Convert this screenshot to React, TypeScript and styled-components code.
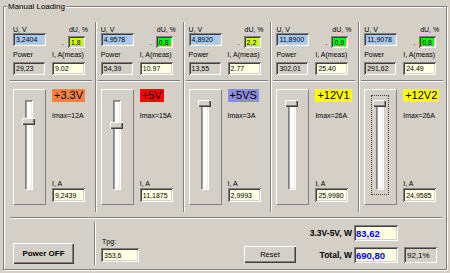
import styled, { createGlobalStyle } from "styled-components";

const face = "#d4d0c8";
const shadow = "#808080";
const dark = "#404040";
const lime = "#ccff00";
const green = "#00ff00";
const paper = "#ffffe1";
const sky = "#a6caf0";

type Rail = {
    u: string;
    du: string;
    duColor: string;
    power: string;
    meas: string;
    name: string;
    color: string;
    imax: string;
    current: string;
    thumb: number;
    focus?: boolean;
};

const rails: Rail[] = [
    {u: "3,2404", du: "1,8", duColor: lime, power: "29,23", meas: "9.02", name: "+3.3V", color: "#ff8040", imax: "12A", current: "9,2439", thumb: 17},
    {u: "4,9578", du: "0,8", duColor: green, power: "54,39", meas: "10.97", name: "+5V", color: "#ff0000", imax: "15A", current: "11,1875", thumb: 21},
    {u: "4,8920", du: "2,2", duColor: lime, power: "13,55", meas: "2.77", name: "+5VS", color: "#8c8cdc", imax: "3A", current: "2,9993", thumb: -1},
    {u: "11,8900", du: "0,9", duColor: green, power: "302,01", meas: "25.40", name: "+12V1", color: "#ffff00", imax: "26A", current: "25,9980", thumb: -1},
    {u: "11,9078", du: "0,8", duColor: green, power: "291,62", meas: "24.49", name: "+12V2", color: "#ffff00", imax: "26A", current: "24,9585", thumb: -1, focus: true},
];

const GlobalStyle = createGlobalStyle`
    html, body {
        margin: 0;
        background: ${face};
    }
    body {
        font-family: "Liberation Sans", Arial, sans-serif;
        font-size: 7px;
        color: #000;
    }
`;

export default function App() {
    return (
        <>
            <GlobalStyle/>
            <Window>
                <Group>
                    <Legend>Manual Loading</Legend>
                    <Columns>
                        {rails.map((r, i) => (
                            <RailColumn key={r.name} rail={r} first={i === 0}/>
                        ))}
                    </Columns>
                    <HLine $w={432}/>
                    <Bottom>
                        <PowerCell>
                            <Button $w={61} $h={21} $bold>Power OFF</Button>
                        </PowerCell>
                        <VSep/>
                        <TpgCell>
                            <TpgLabel>Tpg:</TpgLabel>
                            <Field $w={38} $h={14} $bg={paper}>353,6</Field>
                        </TpgCell>
                        <ResetWrap>
                            <Button $w={52} $h={17}>Reset</Button>
                        </ResetWrap>
                        <Totals>
                            <TotalLabel>3.3V-5V, W</TotalLabel>
                            <Field $w={44} $h={16} $bg={paper}><BlueValue>83,62</BlueValue></Field>
                            <span/>
                            <TotalLabel>Total, W</TotalLabel>
                            <Field $w={44} $h={16} $bg={paper}><BlueValue>690,80</BlueValue></Field>
                            <Percent $w={33} $h={16} $bg={face}>92,1%</Percent>
                        </Totals>
                    </Bottom>
                </Group>
            </Window>
        </>
    );
}

const RailColumn = ({rail, first}: { rail: Rail; first: boolean }) => (
    <>
        {!first && <Separator/>}
        <Column>
            <LabelRow>
                <Label>U, V</Label>
                <Label>dU, %</Label>
            </LabelRow>
            <ValueRow>
                <Field $w={33} $h={13} $bg={sky}>{rail.u}</Field>
                <Dot>.</Dot>
                <DeltaField $w={17} $h={12} $bg={rail.duColor}>{rail.du}</DeltaField>
            </ValueRow>
            <PairGrid>
                <Label>Power</Label>
                <Label>I, A(meas)</Label>
                <Field $w={32} $h={13} $bg={face}>{rail.power}</Field>
                <Field $w={33} $h={13} $bg={paper}>{rail.meas}</Field>
            </PairGrid>
            <ColumnLine $w={82}/>
            <Lower>
                <SliderBox>
                    <Track $focus={rail.focus}>
                        <Thumb $top={rail.thumb}/>
                    </Track>
                </SliderBox>
                <Side>
                    <RailName $bg={rail.color}>{rail.name}</RailName>
                    <Imax>Imax={rail.imax}</Imax>
                    <Spacer/>
                    <CurrentLabel>I, A</CurrentLabel>
                    <Field $w={33} $h={14} $bg={paper}>{rail.current}</Field>
                </Side>
            </Lower>
        </Column>
    </>
);

const Window = styled.div`
    box-sizing: border-box;
    width: 450px;
    height: 273px;
    padding: 6px 0 0 3px;
`;

const Group = styled.div`
    position: relative;
    box-sizing: border-box;
    width: 444px;
    height: 264px;
    border: 1px solid ${shadow};
    box-shadow: inset 1px 1px 0 #fff, 1px 1px 0 #fff;
    padding: 15px 0 0 9px;
`;

const Legend = styled.span`
    position: absolute;
    top: -5px;
    left: 3px;
    padding: 0 1px;
    background: ${face};
    font-size: 8px;
    line-height: 10px;
    white-space: nowrap;
`;

const Columns = styled.div`
    display: flex;
    height: 190px;
    margin-bottom: 5px;
`;

const Column = styled.div`
    box-sizing: border-box;
    width: 82px;
    padding-top: 4px;
    display: flex;
    flex-direction: column;
`;

const Separator = styled.div`
    width: 0;
    border-left: 1px solid ${shadow};
    border-right: 1px solid #fff;
    margin-right: 4px;
`;

const Label = styled.span`
    line-height: 8px;
    white-space: nowrap;
`;

const LabelRow = styled.div`
    display: flex;
    justify-content: space-between;
    width: 75px;
    height: 7px;
    line-height: 8px;
`;

const ValueRow = styled.div`
    display: flex;
    align-items: flex-start;
    width: 75px;
    height: 15px;
`;

const Field = styled.div<{ $w: number; $h: number; $bg: string }>`
    box-sizing: border-box;
    width: ${p => p.$w}px;
    height: ${p => p.$h}px;
    background: ${p => p.$bg};
    box-shadow: inset 1px 1px 0 ${shadow}, inset -1px -1px 0 #fff,
    inset 2px 2px 0 ${dark}, inset -2px -2px 0 ${face};
    padding: 1px 0 0 3px;
    display: flex;
    align-items: center;
    white-space: nowrap;
    overflow: hidden;
    line-height: 8px;
`;

const DeltaField = styled(Field)`
    margin-top: 3px;
    margin-right: 3px;
`;

const Dot = styled.span`
    align-self: flex-end;
    margin: 0 4px 1px auto;
    line-height: 8px;
`;

const PairGrid = styled.div`
    display: grid;
    grid-template-columns: 39px 36px;
    row-gap: 3px;
    margin-top: 3px;
`;

const HLine = styled.div<{ $w: number }>`
    width: ${p => p.$w}px;
    height: 0;
    border-top: 1px solid ${shadow};
    border-bottom: 1px solid #fff;
    margin-left: -3px;
`;

const ColumnLine = styled(HLine)`
    margin-top: 5px;
`;

const Lower = styled.div`
    display: flex;
    height: 116px;
    margin-top: 7px;
`;

const SliderBox = styled.div`
    box-sizing: border-box;
    width: 33px;
    height: 116px;
    border: 1px solid;
    border-color: #fff ${shadow} ${shadow} #fff;
    padding: 10px 0 0 11px;
`;

const Track = styled.div<{ $focus?: boolean }>`
    position: relative;
    box-sizing: border-box;
    width: 8px;
    height: 90px;
    background: #fff;
    border: 1px solid;
    border-color: ${shadow} #fff #fff ${shadow};
    box-shadow: inset 1px 1px 0 #a0a0a0, inset -1px -1px 0 #ececec;
    outline: ${p => (p.$focus ? `1px dotted ${dark}` : "none")};
    outline-offset: 4px;
`;

const Thumb = styled.div<{ $top: number }>`
    position: absolute;
    left: -4px;
    top: ${p => p.$top}px;
    width: 13px;
    height: 7px;
    background: ${face};
    box-shadow: inset 1px 1px 0 #fff, inset -1px -1px 0 ${dark}, inset -2px -2px 0 ${shadow};
`;

const Side = styled.div`
    display: flex;
    flex-direction: column;
    align-items: flex-start;
    margin-left: 6px;
    padding-bottom: 3px;
`;

const RailName = styled.div<{ $bg: string }>`
    background: ${p => p.$bg};
    font-size: 11px;
    line-height: 13px;
    height: 13px;
    padding: 0 2px;
    white-space: nowrap;
`;

const Imax = styled(Label)`
    margin-top: 10px;
`;

const Spacer = styled.div`
    flex: 1;
`;

const CurrentLabel = styled(Label)`
    height: 8px;
`;

const Bottom = styled.div`
    display: flex;
    height: 48px;
`;

const PowerCell = styled.div`
    box-sizing: border-box;
    width: 81px;
    display: flex;
    align-items: flex-end;
    padding-bottom: 3px;
`;

const Button = styled.button<{ $w: number; $h: number; $bold?: boolean }>`
    width: ${p => p.$w}px;
    height: ${p => p.$h}px;
    padding: 0;
    border: none;
    background: ${face};
    color: #000;
    font-family: "Liberation Sans", Arial, sans-serif;
    font-size: ${p => (p.$bold ? 8 : 7.5)}px;
    font-weight: ${p => (p.$bold ? 700 : 400)};
    box-shadow: inset 1px 1px 0 #fff, inset -1px -1px 0 ${dark}, inset -2px -2px 0 ${shadow};
`;

const VSep = styled.div`
    width: 0;
    border-left: 1px solid ${shadow};
    border-right: 1px solid #fff;
    margin: 3px 0 2px;
`;

const TpgCell = styled.div`
    display: flex;
    flex-direction: column;
    justify-content: flex-end;
    padding: 0 0 5px 5px;
`;

const TpgLabel = styled(Label)`
    height: 8px;
    margin: 0 0 2px 1px;
`;

const ResetWrap = styled.div`
    align-self: flex-end;
    margin: 0 0 4px 105px;
`;

const Totals = styled.div`
    margin: 6px 9px 0 auto;
    display: grid;
    grid-template-columns: auto 44px 37px;
    grid-auto-rows: 16px;
    column-gap: 2px;
    row-gap: 6px;
    align-content: start;
`;

const TotalLabel = styled.span`
    justify-self: end;
    align-self: center;
    font-size: 8.5px;
    font-weight: 700;
    white-space: nowrap;
`;

const BlueValue = styled.span`
    color: #0000ff;
    font-size: 9.5px;
    font-weight: 700;
    margin-left: -1px;
`;

const Percent = styled(Field)`
    justify-self: end;
    font-size: 8px;
`;
